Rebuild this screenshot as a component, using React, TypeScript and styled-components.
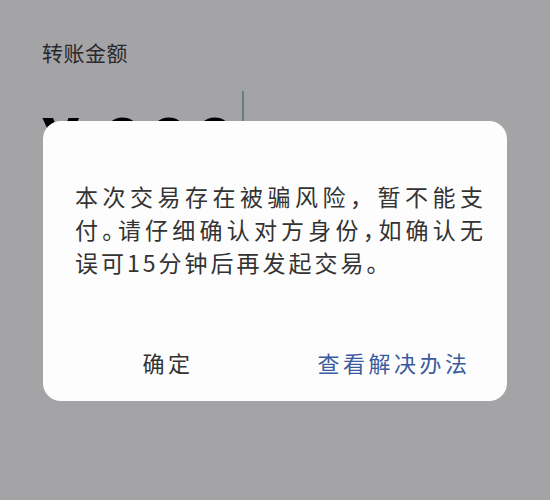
import React from 'react'
import styled, { createGlobalStyle } from 'styled-components'

const GlobalStyle = createGlobalStyle`
  html, body {
    margin: 0;
    padding: 0;
  }
  body {
    background: #ffffff;
    font-family: "Noto Sans CJK SC", "Noto Sans", sans-serif;
  }
`

const App = () => {
  return (
    <>
      <GlobalStyle />
      <Page>
        <Label>转账金额</Label>
        <AmountRow>
          <Currency>¥</Currency>
          <Digits>000</Digits>
          <Caret />
        </AmountRow>
      </Page>

      <Overlay>
        <Dialog>
          <Message>
            <Line $fill>本次交易存在被骗风险，暂不能支</Line>
            <Line $fill>
              付<Punct>。</Punct>请仔细确认对方身份<Punct>，</Punct>如确认无
            </Line>
            <Line>误可15分钟后再发起交易。</Line>
          </Message>
          <Actions>
            <Action $tone="#333333">确定</Action>
            <Action $tone="#3a5c9e">查看解决办法</Action>
          </Actions>
        </Dialog>
      </Overlay>
    </>
  )
}

export default App

const Page = styled.div`
  width: 550px;
  height: 500px;
  box-sizing: border-box;
  padding: 34px 0 0 42px;
  display: flex;
  flex-direction: column;
`

const Label = styled.div`
  font-size: 21px;
  line-height: 36px;
  letter-spacing: 0.5px;
  color: #404044;
`

const AmountRow = styled.div`
  display: flex;
  align-items: flex-start;
  margin-top: 42px;
  font-family: Roboto, "Liberation Sans", sans-serif;
  font-weight: 700;
  font-size: 70px;
  line-height: 64px;
  color: #000;
`

const Currency = styled.span`
  margin-right: 23px;
`

const Digits = styled.span`
  letter-spacing: 6px;
`

const Caret = styled.span`
  width: 2px;
  height: 76px;
  margin: -21px 0 0 1px;
  background: #9cc7b7;
`

const Overlay = styled.div`
  position: fixed;
  inset: 0;
  background: rgba(0, 0, 6, 0.355);
  display: flex;
  justify-content: center;
  align-items: flex-start;
  padding-top: 121px;
`

const Dialog = styled.div`
  width: 464px;
  height: 280px;
  box-sizing: border-box;
  background: #fdfdfd;
  border-radius: 18px;
  padding-top: 59px;
  display: flex;
  flex-direction: column;
`

const Message = styled.div`
  width: 411px;
  padding-left: 32px;
  font-size: 23px;
  line-height: 33px;
  letter-spacing: 3px;
  color: #333333;
`

const Line = styled.div<{ $fill?: boolean }>`
  white-space: nowrap;
  text-align: ${({ $fill }) => ($fill ? 'justify' : 'left')};
  text-align-last: ${({ $fill }) => ($fill ? 'justify' : 'auto')};
`

const Punct = styled.span`
  font-feature-settings: "halt";
`

const Actions = styled.div`
  flex: 1;
  display: flex;
  margin-top: 43px;
  padding-left: 12px;
`

const Action = styled.div<{ $tone: string }>`
  flex: 1;
  display: flex;
  justify-content: center;
  align-items: center;
  font-size: 22px;
  letter-spacing: 3.5px;
  color: ${({ $tone }) => $tone};
  cursor: pointer;
`
